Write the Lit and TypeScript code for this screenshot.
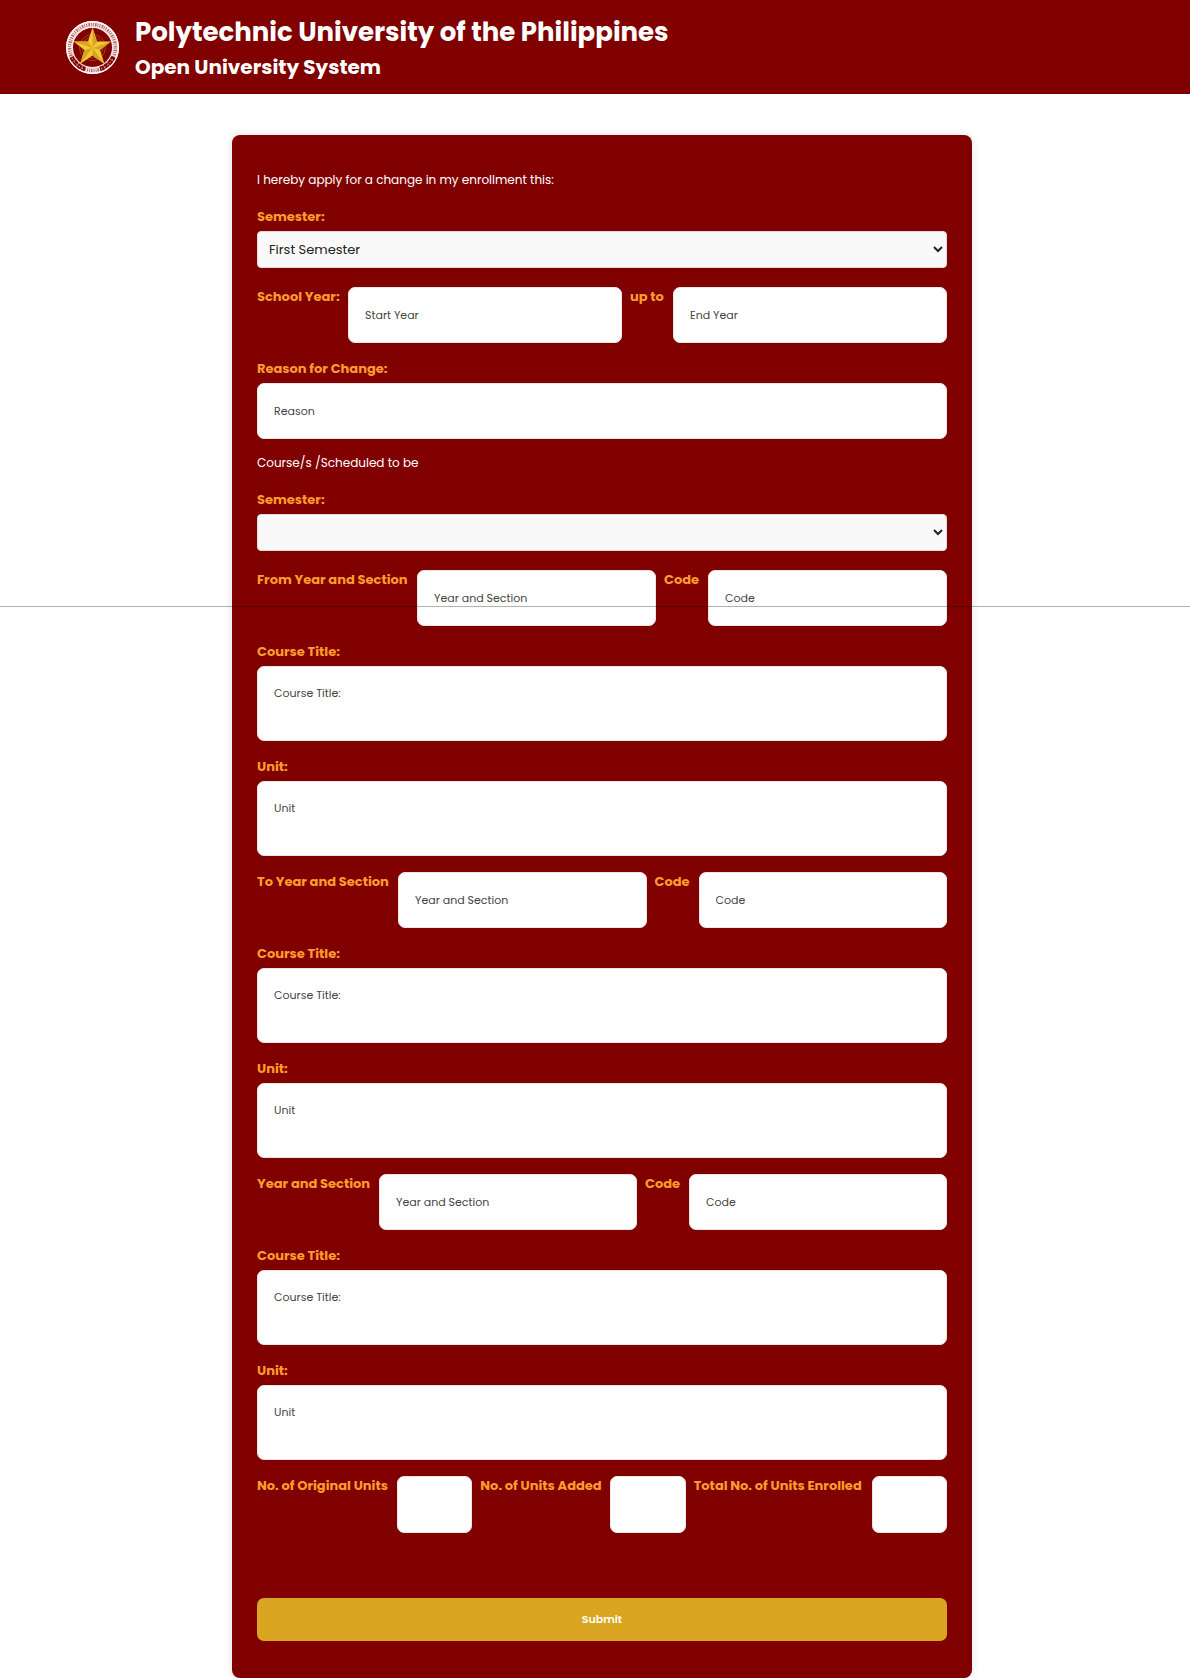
import { LitElement, html, css } from "lit";
import { customElement } from "lit/decorators.js";

const base = css`
  * {
    box-sizing: border-box;
  }
  h1,
  h2,
  p {
    margin: 0;
  }
`;

@customElement("site-header")
class SiteHeader extends LitElement {
  static styles = [
    base,
    css`
      :host {
        display: block;
      }
      .bar {
        display: flex;
        align-items: center;
        gap: 15px;
        padding: 12px 65px 11px;
        background: #800000;
        border-bottom: 1px solid #6a0000;
        color: #fff;
      }
      .seal {
        flex: none;
        width: 55px;
        height: 55px;
      }
      .title {
        font-size: 26px;
        line-height: 40px;
        font-weight: 700;
      }
      .subtitle {
        font-size: 20px;
        line-height: 30px;
        font-weight: 700;
      }
    `,
  ];

  render() {
    return html`
      <header class="bar">
        <svg class="seal" viewBox="0 0 110 110" aria-hidden="true">
          <circle cx="55" cy="55" r="46" fill="none" stroke="#f6e4e4" stroke-width="14" />
          <circle cx="55" cy="55" r="46" fill="none" stroke="#800000" stroke-opacity=".55" stroke-width="7" stroke-dasharray="2 2.6 3 2 1.5 2.4" />
          <circle cx="55" cy="55" r="51.500" fill="none" stroke="#fff" stroke-width="2.500" />
          <g fill="none" stroke="#800000" stroke-width="9">
            <path d="M13 74A46 46 0 0 0 40 98" stroke-dasharray="9 1" />
            <path d="M70 98A46 46 0 0 0 97 74" stroke-dasharray="9 1" />
          </g>
          <g fill="none" stroke="#f6e4e4" stroke-width="2">
            <path d="M14 76A45 45 0 0 0 38 98" stroke-dasharray="3 4" />
            <path d="M72 98A45 45 0 0 0 96 76" stroke-dasharray="3 4" />
          </g>
          <g fill="none" stroke="#c9822c" stroke-width="1">
            <circle cx="55" cy="55" r="26" />
            <circle cx="55" cy="55" r="21" />
          </g>
          <path d="M55 15L64 43H92L70 60L79 88L55 71L30 88L39 60L17 43H46Z" fill="#f2cb2e" />
          <path d="M55 15V56L64 43ZM92 43L55 56L70 60ZM79 88L55 56V71ZM30 88L55 56L39 60ZM17 43L55 56L46 43Z" fill="#d9a325" />
        </svg>
        <div>
          <h1 class="title">Polytechnic University of the Philippines</h1>
          <h2 class="subtitle">Open University System</h2>
        </div>
      </header>
    `;
  }
}

@customElement("enrollment-form")
class EnrollmentForm extends LitElement {
  static styles = [
    base,
    css`
      :host {
        display: block;
      }
      .card {
        padding: 37px 25px;
        background: #800000;
        border-radius: 8px;
        box-shadow: 0 0 10px rgba(0, 0, 0, 0.12);
      }
      .note {
        margin-bottom: 19px;
        color: #fff;
        font-size: 12px;
        line-height: 16px;
      }
      .label {
        color: #ff9c2b;
        font-size: 13px;
        line-height: 20px;
        font-weight: 700;
        white-space: nowrap;
      }
      .field {
        display: flex;
        flex-direction: column;
        gap: 4px;
        margin-bottom: 16px;
      }
      .field.choice {
        margin-bottom: 19px;
      }
      .row {
        display: grid;
        align-items: start;
        gap: 8px;
        margin-bottom: 16px;
      }
      .row.school {
        grid-template-columns: 83px 1fr 35px 1fr;
      }
      .row.from {
        grid-template-columns: 152px 1fr 36px 1fr;
      }
      .row.to {
        grid-template-columns: 133px 1fr 36px 1fr;
      }
      .row.plain {
        grid-template-columns: 114px 1fr 36px 1fr;
      }
      .row.units {
        grid-template-columns: 132px 1fr 122px 1fr 170px 1fr;
        margin-bottom: 65px;
      }
      .input,
      .area {
        display: block;
        width: 100%;
        min-width: 0;
        margin: 0;
        padding: 17px 16px;
        border: 1px solid #f3e4e4;
        border-radius: 7px;
        background: #fff;
        color: #333;
        font-family: inherit;
        font-size: 11px;
        line-height: 18px;
        resize: none;
      }
      .input {
        height: 56px;
      }
      .units .input {
        height: 57px;
      }
      .area {
        height: 75px;
        overflow: hidden;
      }
      .input::placeholder,
      .area::placeholder {
        color: #444;
        opacity: 1;
      }
      .select {
        width: 100%;
        height: 37px;
        padding: 0 7px;
        border: 1px solid #e6d6d6;
        border-radius: 4px;
        background: #f9f9f9;
        color: #222;
        font-family: inherit;
        font-size: 13px;
      }
      .submit {
        display: block;
        width: 100%;
        height: 43px;
        border: 0;
        border-radius: 7px;
        background: #daa520;
        color: #fff;
        font-family: inherit;
        font-size: 11px;
        font-weight: 600;
      }
    `,
  ];

  private section(kind: string, title: string) {
    return html`
      <div class="row ${kind}">
        <label class="label" for="${kind}-section">${title}</label>
        <input class="input" id="${kind}-section" placeholder="Year and Section" />
        <label class="label" for="${kind}-code">Code</label>
        <input class="input" id="${kind}-code" placeholder="Code" />
      </div>
      <div class="field">
        <label class="label" for="${kind}-course">Course Title:</label>
        <textarea class="area" id="${kind}-course" placeholder="Course Title:"></textarea>
      </div>
      <div class="field">
        <label class="label" for="${kind}-unit">Unit:</label>
        <textarea class="area" id="${kind}-unit" placeholder="Unit"></textarea>
      </div>
    `;
  }

  render() {
    return html`
      <form class="card">
        <p class="note">I hereby apply for a change in my enrollment this:</p>
        <div class="field choice">
          <label class="label" for="semester">Semester:</label>
          <select class="select" id="semester">
            <option>First Semester</option>
          </select>
        </div>
        <div class="row school">
          <label class="label" for="start-year">School Year:</label>
          <input class="input" id="start-year" placeholder="Start Year" />
          <label class="label" for="end-year">up to</label>
          <input class="input" id="end-year" placeholder="End Year" />
        </div>
        <div class="field">
          <label class="label" for="reason">Reason for Change:</label>
          <input class="input" id="reason" placeholder="Reason" />
        </div>
        <p class="note">Course/s /Scheduled to be</p>
        <div class="field choice">
          <label class="label" for="scheduled">Semester:</label>
          <select class="select" id="scheduled">
            <option></option>
          </select>
        </div>
        ${this.section("from", "From Year and Section")}
        ${this.section("to", "To Year and Section")}
        ${this.section("plain", "Year and Section")}
        <div class="row units">
          <label class="label" for="original">No. of Original Units</label>
          <input class="input" id="original" />
          <label class="label" for="added">No. of Units Added</label>
          <input class="input" id="added" />
          <label class="label" for="total">Total No. of Units Enrolled</label>
          <input class="input" id="total" />
        </div>
        <button class="submit" type="button">Submit</button>
      </form>
    `;
  }
}

@customElement("app-root")
class AppRoot extends LitElement {
  static styles = [
    base,
    css`
      :host {
        display: block;
        position: relative;
        background: #fff;
        font-family: Poppins, Inter, "Open Sans", sans-serif;
      }
      .main {
        display: flex;
        justify-content: center;
        padding: 41px 0 0 14px;
      }
      .form {
        flex: 0 1 740px;
      }
      /* Hairline that lies over the whole page. */
      .rule {
        position: absolute;
        top: 606px;
        left: 0;
        right: 0;
        height: 1px;
        margin: 0;
        border: 0;
        background: rgba(0, 0, 0, 0.3);
        pointer-events: none;
      }
    `,
  ];

  render() {
    return html`
      <site-header></site-header>
      <main class="main"><enrollment-form class="form"></enrollment-form></main>
      <hr class="rule" />
    `;
  }
}
